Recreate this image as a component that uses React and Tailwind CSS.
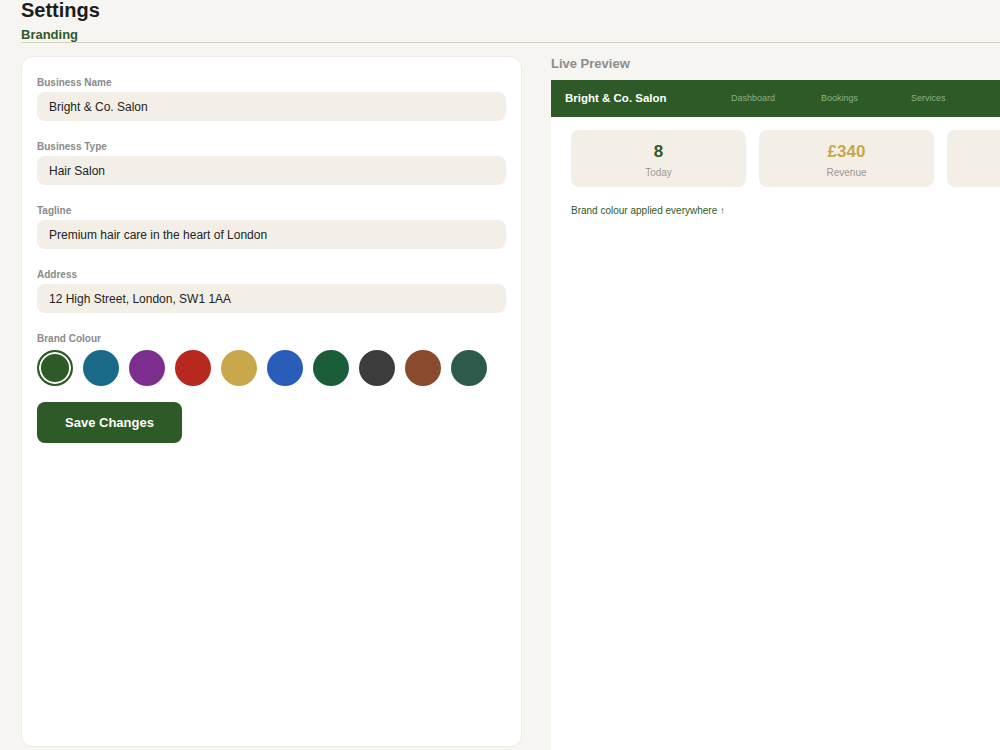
import React from 'react';

const fields = [
  { label: 'Business Name', value: 'Bright & Co. Salon' },
  { label: 'Business Type', value: 'Hair Salon' },
  { label: 'Tagline', value: 'Premium hair care in the heart of London' },
  { label: 'Address', value: '12 High Street, London, SW1 1AA' },
];

const swatches = [
  'bg-[#2d5a27]',
  'bg-[#1b6a8a]',
  'bg-[#7b2e8e]',
  'bg-[#b7281f]',
  'bg-[#c9a84c]',
  'bg-[#2a5dba]',
  'bg-[#1a5d39]',
  'bg-[#3c3c3c]',
  'bg-[#8a4a2e]',
  'bg-[#2c5a4b]',
];

const Field = ({ label, value }) => (
  <div className="flex flex-col">
    <label className="block text-[10px] leading-[12px] font-bold text-[#8a8a8a]">{label}</label>
    <div className="mt-[3px] h-[29px] flex items-center px-3 rounded-lg bg-[#f4efe6] text-[12px] text-[#222]">
      {value}
    </div>
  </div>
);

const StatCard = ({ value, label, valueClass }) => (
  <div className="w-[175px] h-[57px] shrink-0 rounded-lg bg-[#f4efe6] flex flex-col items-center pt-[12px]">
    <div className={`h-[20px] text-[17px] leading-[20px] font-bold ${valueClass}`}>{value}</div>
    <div className="mt-[5px] text-[10px] leading-[12px] text-[#999]">{label}</div>
  </div>
);

export default function App() {
  return (
    <div className="h-[750px] w-[1000px] overflow-hidden bg-[#f7f5f1] pl-[21px] font-['Liberation_Sans',Arial,sans-serif]">
      <div className="border-b border-[#d6d1c7]">
        <h1 className="text-[20px] leading-[20px] font-bold text-[#1c1c1c]">Settings</h1>
        <div className="mt-[7px] text-[13px] leading-[15px] font-bold text-[#2d5a27]">Branding</div>
      </div>

      <div className="mt-[13px] flex gap-[29px]">
        <div className="w-[501px] h-[691px] shrink-0 rounded-xl bg-white border border-[#eeebe5] px-[15px] pt-[20px]">
          <div className="flex flex-col gap-[20px]">
            {fields.map((f) => (
              <Field key={f.label} label={f.label} value={f.value} />
            ))}
            <div>
              <label className="block text-[10px] leading-[12px] font-bold text-[#8a8a8a]">Brand Colour</label>
              <div className="mt-[5px] flex gap-[10px]">
                {swatches.map((c, i) => (
                  <div
                    key={c}
                    className={`w-9 h-9 rounded-full ${c} ${i === 0 ? 'border-2 border-[#2d5a27] shadow-[inset_0_0_0_2px_white]' : ''}`}
                  />
                ))}
              </div>
            </div>
          </div>
          <button className="mt-4 w-[145px] h-[41px] rounded-lg bg-[#2d5a27] text-white text-[13px] font-bold">
            Save Changes
          </button>
        </div>

        <div className="flex-1 min-w-0">
          <div className="text-[13px] leading-[16px] font-bold text-[#8c8c8c]">Live Preview</div>
          <div className="mt-[8px] w-[500px] h-[700px] bg-white">
            <div className="h-[37px] bg-[#2d5a27] flex items-center pl-[14px]">
              <div className="w-[166px] text-[11.5px] font-bold text-white">Bright & Co. Salon</div>
              <div className="w-[90px] text-[9px] text-[#8fb086]">Dashboard</div>
              <div className="w-[90px] text-[9px] text-[#8fb086]">Bookings</div>
              <div className="w-[90px] text-[9px] text-[#8fb086]">Services</div>
            </div>
            <div className="pt-[13px] pl-[20px]">
              <div className="flex gap-[13px]">
                <StatCard value="8" label="Today" valueClass="text-[#2d5a27]" />
                <StatCard value="£340" label="Revenue" valueClass="text-[#c9a84c]" />
                <StatCard value="" label="" valueClass="" />
              </div>
              <div className="mt-[18px] text-[10px] leading-[12px] text-[#2d5a27]">Brand colour applied everywhere ↑</div>
            </div>
          </div>
        </div>
      </div>
    </div>
  );
}
